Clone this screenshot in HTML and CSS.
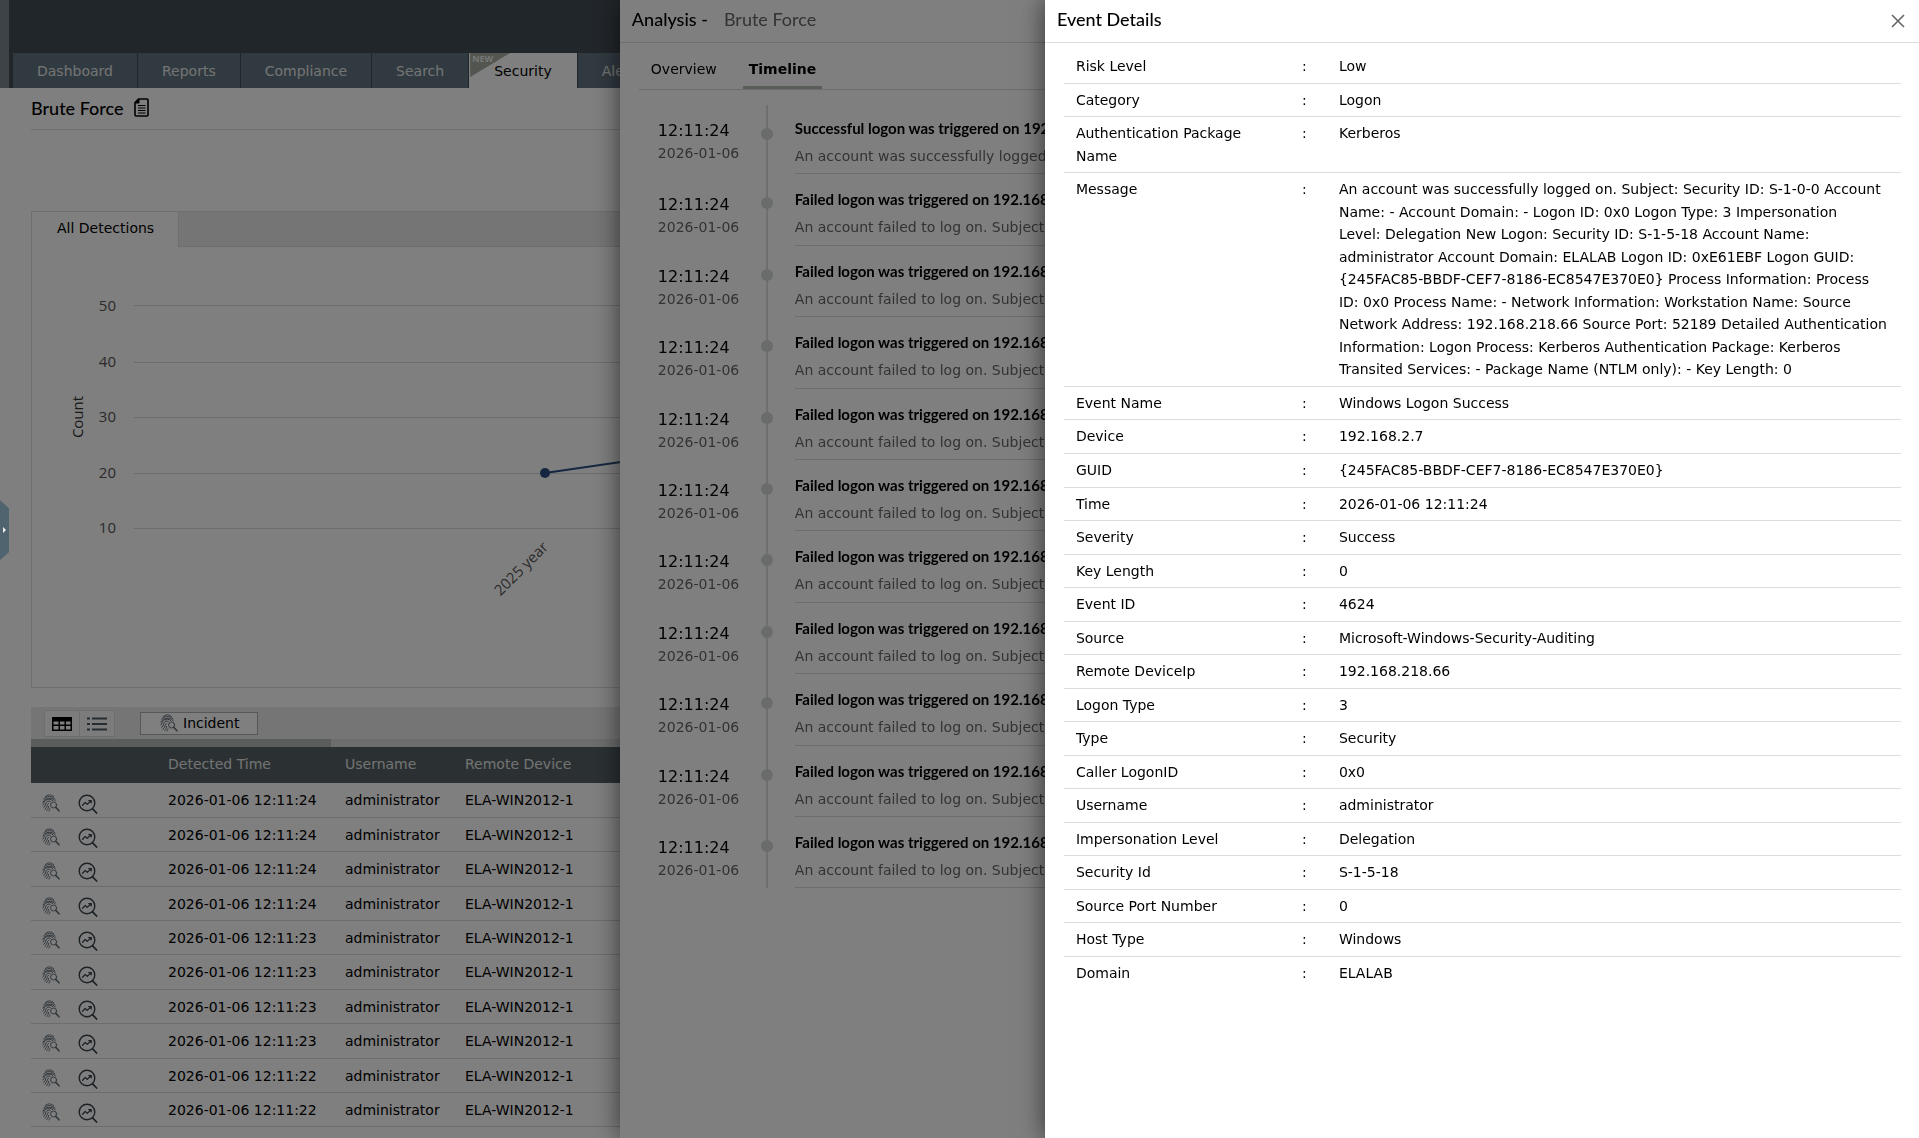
FILE: index.html
```
<!DOCTYPE html>
<html lang="en">
<head>
  <meta charset="UTF-8" />
  <meta name="viewport" content="width=device-width, initial-scale=1.0"/>
  <title>Brute Force - Event Details</title>
  <link rel="stylesheet" href="styles.css">
</head>
<body>

  <!-- shared icons -->
  <svg class="sprite" aria-hidden="true">
    <symbol id="icon-incident" viewBox="0 0 18 18">
      <g fill="none" stroke="currentColor" stroke-width="1" stroke-linecap="round">
        <path d="M3.500 2.400C5.500 .4 9 .4 11.500 2.400"/>
        <path d="M1.600 5C4 1.800 10.500 1.600 13 5"/>
        <path d="M1 8C2 3.600 11 2.800 13.400 7"/>
        <path d="M1 11C2.600 9 1.600 7.600 3.600 6.200 6 4.600 9.500 5 10.800 6.600"/>
        <path d="M1.800 13.400C4.600 10.600 3 9 5 7.600 6.400 6.800 7.600 7 8.400 7.600"/>
        <path d="M3 15.400C5.600 12.600 4.800 10.800 6.400 9.200"/>
        <path d="M4.800 16.600C6.400 14.800 6.400 13.600 6.600 12.400"/>
        <path d="M7 17C7.600 16.200 7.800 15.400 8 14.800"/>
        <circle cx="11.600" cy="11" r="3"/>
        <path d="M13.800 13.400L17 16.800" stroke-width="1.600"/>
      </g>
    </symbol>
    <symbol id="icon-analyze" viewBox="0 0 20 20">
      <g fill="none" stroke="currentColor" stroke-width="1.4" stroke-linecap="round" stroke-linejoin="round">
        <circle cx="9" cy="9" r="7.800"/>
        <path d="M14.600 14.800L18.600 19" stroke-width="1.800"/>
        <path d="M4.600 11.200L7.200 8.400 9.200 10.400 13.200 6.600M10.800 6.600H13.200V8.800" stroke-width="1.300"/>
      </g>
    </symbol>
  </svg>

  <div class="page">
    <header class="topbar">
      <nav class="tabs">
        <a href="#">Dashboard</a>
        <a href="#">Reports</a>
        <a href="#">Compliance</a>
        <a href="#">Search</a>
        <a href="#" class="active"><span class="ribbon">NEW</span>Security</a>
        <a href="#">Alerts</a>
      </nav>
    </header>

    <main>
      <div class="page-title">
        <h1>Brute Force</h1>
        <svg width="15" height="19" viewBox="0 0 15 19" fill="none" stroke="#000">
          <path d="M4.500 1H13a1 1 0 0 1 1 1V17a1 1 0 0 1-1 1H2a1 1 0 0 1-1-1V4.500Z" stroke-width="1.600"/>
          <path d="M1 5H5V1Z" fill="#000"/>
          <path d="M4 7.500H11.500M4 10H11.500M4 12.500H11.500M4 15H11.500" stroke-width="1.200"/>
        </svg>
      </div>

      <section class="chart-box">
        <div class="chart-tabs">
          <button type="button" class="chart-tab">All Detections</button>
        </div>
        <svg class="chart" width="100%" height="440">
          <g class="grid">
            <line x1="102" x2="100%" y1="58" y2="58"/>
            <line x1="102" x2="100%" y1="115" y2="115"/>
            <line x1="102" x2="100%" y1="170" y2="170"/>
            <line x1="102" x2="100%" y1="226" y2="226"/>
            <line x1="102" x2="100%" y1="281" y2="281"/>
          </g>
          <g class="axis" text-anchor="end">
            <text x="84" y="64">50</text>
            <text x="84" y="120">40</text>
            <text x="84" y="175">30</text>
            <text x="84" y="231">20</text>
            <text x="84" y="286">10</text>
            <text transform="translate(517 301) rotate(-45)">2025 year</text>
          </g>
          <text class="axis-title" text-anchor="middle" transform="translate(51 170) rotate(-90)">Count</text>
          <path class="series" d="M513 226L1100 141"/>
          <circle class="point" cx="513" cy="226" r="5"/>
        </svg>
      </section>

      <div class="toolbar">
        <div class="view-toggle">
          <button type="button" aria-label="Table view">
            <svg width="20" height="14" viewBox="0 0 20 14">
              <rect width="20" height="14" fill="#000"/>
              <path d="M1.500 4.500H6.500V7.500H1.500ZM8 4.500H12.500V7.500H8ZM14 4.500H18.500V7.500H14ZM1.500 9H6.500V12.500H1.500ZM8 9H12.500V12.500H8ZM14 9H18.500V12.500H14Z" fill="#fff"/>
            </svg>
          </button>
          <button type="button" aria-label="List view">
            <svg width="20" height="14" viewBox="0 0 20 14" stroke="#4c5860" stroke-width="2">
              <path d="M0 1.500H3M5 1.500H20M0 7H3M5 7H20M0 12.500H3M5 12.500H20"/>
            </svg>
          </button>
        </div>
        <button type="button" class="incident-btn">
          <svg class="icon" width="18" height="18"><use href="#icon-incident"/></svg>
          Incident
        </button>
      </div>
      <div class="scroll-track"><div class="scroll-thumb"></div></div>

      <table class="detections">
        <thead>
          <tr><th class="col-actions"></th><th class="col-time">Detected Time</th><th class="col-user">Username</th><th class="col-device">Remote Device</th><th>Device</th></tr>
        </thead>
        <tbody>
          <tr><td><div class="actions"><svg class="icon" width="18" height="18"><use href="#icon-incident"/></svg><svg class="icon-dark" width="20" height="20"><use href="#icon-analyze"/></svg></div></td><td>2026-01-06 12:11:24</td><td>administrator</td><td>ELA-WIN2012-1</td><td></td></tr>
          <tr><td><div class="actions"><svg class="icon" width="18" height="18"><use href="#icon-incident"/></svg><svg class="icon-dark" width="20" height="20"><use href="#icon-analyze"/></svg></div></td><td>2026-01-06 12:11:24</td><td>administrator</td><td>ELA-WIN2012-1</td><td></td></tr>
          <tr><td><div class="actions"><svg class="icon" width="18" height="18"><use href="#icon-incident"/></svg><svg class="icon-dark" width="20" height="20"><use href="#icon-analyze"/></svg></div></td><td>2026-01-06 12:11:24</td><td>administrator</td><td>ELA-WIN2012-1</td><td></td></tr>
          <tr><td><div class="actions"><svg class="icon" width="18" height="18"><use href="#icon-incident"/></svg><svg class="icon-dark" width="20" height="20"><use href="#icon-analyze"/></svg></div></td><td>2026-01-06 12:11:24</td><td>administrator</td><td>ELA-WIN2012-1</td><td></td></tr>
          <tr><td><div class="actions"><svg class="icon" width="18" height="18"><use href="#icon-incident"/></svg><svg class="icon-dark" width="20" height="20"><use href="#icon-analyze"/></svg></div></td><td>2026-01-06 12:11:23</td><td>administrator</td><td>ELA-WIN2012-1</td><td></td></tr>
          <tr><td><div class="actions"><svg class="icon" width="18" height="18"><use href="#icon-incident"/></svg><svg class="icon-dark" width="20" height="20"><use href="#icon-analyze"/></svg></div></td><td>2026-01-06 12:11:23</td><td>administrator</td><td>ELA-WIN2012-1</td><td></td></tr>
          <tr><td><div class="actions"><svg class="icon" width="18" height="18"><use href="#icon-incident"/></svg><svg class="icon-dark" width="20" height="20"><use href="#icon-analyze"/></svg></div></td><td>2026-01-06 12:11:23</td><td>administrator</td><td>ELA-WIN2012-1</td><td></td></tr>
          <tr><td><div class="actions"><svg class="icon" width="18" height="18"><use href="#icon-incident"/></svg><svg class="icon-dark" width="20" height="20"><use href="#icon-analyze"/></svg></div></td><td>2026-01-06 12:11:23</td><td>administrator</td><td>ELA-WIN2012-1</td><td></td></tr>
          <tr><td><div class="actions"><svg class="icon" width="18" height="18"><use href="#icon-incident"/></svg><svg class="icon-dark" width="20" height="20"><use href="#icon-analyze"/></svg></div></td><td>2026-01-06 12:11:22</td><td>administrator</td><td>ELA-WIN2012-1</td><td></td></tr>
          <tr><td><div class="actions"><svg class="icon" width="18" height="18"><use href="#icon-incident"/></svg><svg class="icon-dark" width="20" height="20"><use href="#icon-analyze"/></svg></div></td><td>2026-01-06 12:11:22</td><td>administrator</td><td>ELA-WIN2012-1</td><td></td></tr>
        </tbody>
      </table>
    </main>
  </div>

  <!-- Analysis drawer -->
  <aside class="drawer analysis">
    <div class="drawer-head">
      <h2>Analysis -</h2>
      <span class="subject">Brute Force</span>
    </div>
    <div class="drawer-tabs">
      <a href="#">Overview</a>
      <a href="#" class="active">Timeline</a>
    </div>
    <ol class="timeline">
      <li><div class="when"><b>12:11:24</b><span>2026-01-06</span></div><div class="rail"></div><div class="what"><h3>Successful logon was triggered on 192.168</h3><p>An account was successfully logged on.</p></div></li>
      <li><div class="when"><b>12:11:24</b><span>2026-01-06</span></div><div class="rail"></div><div class="what"><h3>Failed logon was triggered on 192.168</h3><p>An account failed to log on. Subject:</p></div></li>
      <li><div class="when"><b>12:11:24</b><span>2026-01-06</span></div><div class="rail"></div><div class="what"><h3>Failed logon was triggered on 192.168</h3><p>An account failed to log on. Subject:</p></div></li>
      <li><div class="when"><b>12:11:24</b><span>2026-01-06</span></div><div class="rail"></div><div class="what"><h3>Failed logon was triggered on 192.168</h3><p>An account failed to log on. Subject:</p></div></li>
      <li><div class="when"><b>12:11:24</b><span>2026-01-06</span></div><div class="rail"></div><div class="what"><h3>Failed logon was triggered on 192.168</h3><p>An account failed to log on. Subject:</p></div></li>
      <li><div class="when"><b>12:11:24</b><span>2026-01-06</span></div><div class="rail"></div><div class="what"><h3>Failed logon was triggered on 192.168</h3><p>An account failed to log on. Subject:</p></div></li>
      <li><div class="when"><b>12:11:24</b><span>2026-01-06</span></div><div class="rail"></div><div class="what"><h3>Failed logon was triggered on 192.168</h3><p>An account failed to log on. Subject:</p></div></li>
      <li><div class="when"><b>12:11:24</b><span>2026-01-06</span></div><div class="rail"></div><div class="what"><h3>Failed logon was triggered on 192.168</h3><p>An account failed to log on. Subject:</p></div></li>
      <li><div class="when"><b>12:11:24</b><span>2026-01-06</span></div><div class="rail"></div><div class="what"><h3>Failed logon was triggered on 192.168</h3><p>An account failed to log on. Subject:</p></div></li>
      <li><div class="when"><b>12:11:24</b><span>2026-01-06</span></div><div class="rail"></div><div class="what"><h3>Failed logon was triggered on 192.168</h3><p>An account failed to log on. Subject:</p></div></li>
      <li><div class="when"><b>12:11:24</b><span>2026-01-06</span></div><div class="rail"></div><div class="what"><h3>Failed logon was triggered on 192.168</h3><p>An account failed to log on. Subject:</p></div></li>
    </ol>
  </aside>

  <div class="overlay"></div>

  <button type="button" class="side-handle" aria-label="Expand sidebar"></button>

  <!-- Event Details drawer -->
  <aside class="drawer details">
    <div class="drawer-head">
      <h2>Event Details</h2>
      <button type="button" class="close" aria-label="Close">
        <svg width="14" height="14" viewBox="0 0 14 14" stroke="#666" stroke-width="1.600"><path d="M1 1L13 13M13 1L1 13"/></svg>
      </button>
    </div>
    <table class="fields">
      <tbody>
        <tr><th>Risk Level</th><td class="sep">:</td><td>Low</td></tr>
        <tr><th>Category</th><td class="sep">:</td><td>Logon</td></tr>
        <tr><th>Authentication Package Name</th><td class="sep">:</td><td>Kerberos</td></tr>
        <tr>
          <th>Message</th><td class="sep">:</td>
          <td>
            An account was successfully logged on. Subject: Security ID: S-1-0-0 Account<br>
            Name: - Account Domain: - Logon ID: 0x0 Logon Type: 3 Impersonation<br>
            Level: Delegation New Logon: Security ID: S-1-5-18 Account Name:<br>
            administrator Account Domain: ELALAB Logon ID: 0xE61EBF Logon GUID:<br>
            {245FAC85-BBDF-CEF7-8186-EC8547E370E0} Process Information: Process<br>
            ID: 0x0 Process Name: - Network Information: Workstation Name: Source<br>
            Network Address: 192.168.218.66 Source Port: 52189 Detailed Authentication<br>
            Information: Logon Process: Kerberos Authentication Package: Kerberos<br>
            Transited Services: - Package Name (NTLM only): - Key Length: 0
          </td>
        </tr>
        <tr><th>Event Name</th><td class="sep">:</td><td>Windows Logon Success</td></tr>
        <tr><th>Device</th><td class="sep">:</td><td>192.168.2.7</td></tr>
        <tr><th>GUID</th><td class="sep">:</td><td>{245FAC85-BBDF-CEF7-8186-EC8547E370E0}</td></tr>
        <tr><th>Time</th><td class="sep">:</td><td>2026-01-06 12:11:24</td></tr>
        <tr><th>Severity</th><td class="sep">:</td><td>Success</td></tr>
        <tr><th>Key Length</th><td class="sep">:</td><td>0</td></tr>
        <tr><th>Event ID</th><td class="sep">:</td><td>4624</td></tr>
        <tr><th>Source</th><td class="sep">:</td><td>Microsoft-Windows-Security-Auditing</td></tr>
        <tr><th>Remote DeviceIp</th><td class="sep">:</td><td>192.168.218.66</td></tr>
        <tr><th>Logon Type</th><td class="sep">:</td><td>3</td></tr>
        <tr><th>Type</th><td class="sep">:</td><td>Security</td></tr>
        <tr><th>Caller LogonID</th><td class="sep">:</td><td>0x0</td></tr>
        <tr><th>Username</th><td class="sep">:</td><td>administrator</td></tr>
        <tr><th>Impersonation Level</th><td class="sep">:</td><td>Delegation</td></tr>
        <tr><th>Security Id</th><td class="sep">:</td><td>S-1-5-18</td></tr>
        <tr><th>Source Port Number</th><td class="sep">:</td><td>0</td></tr>
        <tr><th>Host Type</th><td class="sep">:</td><td>Windows</td></tr>
        <tr><th>Domain</th><td class="sep">:</td><td>ELALAB</td></tr>
      </tbody>
    </table>
  </aside>

</body>
</html>
```
FILE: styles.css
```
* { box-sizing: border-box; margin: 0; padding: 0; }
body {
  font-family: Verdana, "DejaVu Sans", sans-serif;
  font-size: 14px;
  line-height: 1.6;
  color: #000;
  background: #fff;
  height: 100vh;
  overflow: hidden;
}
button { font: inherit; color: inherit; background: none; border: none; cursor: pointer; }
a { color: inherit; text-decoration: none; }
svg { display: block; }
.sprite { position: absolute; width: 0; height: 0; }
.icon { color: #66717a; }
.icon-dark { color: #39434a; }

/* Top bar */
.topbar {
  background-color: #434c54;
  border-left: 9px solid #7b868e;
  padding: 53px 0 0 4px;
}
.tabs { display: flex; gap: 1px; }
.tabs a {
  position: relative;
  height: 35px;
  line-height: 36px;
  padding: 0 24px;
  background-color: #637480;
  color: #e6e9e9;
}
.tabs .active { background-color: #fff; color: #000; padding: 0 25px; }
.ribbon {
  position: absolute;
  top: 0;
  left: 1px;
  width: 40px;
  height: 24px;
  padding-left: 2px;
  background-color: #a4aaa0;
  clip-path: polygon(0 0, 100% 0, 0 100%);
  font: bold 9px/12px "Open Sans", sans-serif;
  color: #eee;
}

/* Page content */
main { padding-left: 31px; }
.page-title {
  display: flex;
  align-items: center;
  gap: 10px;
  height: 42px;
  padding-bottom: 2px;
  border-bottom: 1px solid #dcdcdc;
}
h1, h2, .subject { font: 500 18px/24px Lato, sans-serif; }

.chart-box { margin-top: 81px; border: 1px solid #dcdcdc; }
.chart-tabs { background-color: #ebebeb; border-bottom: 1px solid #dcdcdc; height: 35px; }
.chart-tab {
  height: 35px;
  padding: 0 24px 3px 25px;
  background-color: #fff;
  border-right: 1px solid #dcdcdc;
}
.grid line { stroke: #d8d8d8; shape-rendering: crispEdges; }
.axis, .axis-title { font-family: "Open Sans", sans-serif; font-size: 15px; fill: #555; }
.axis-title { fill: #333; }
.series { stroke: #2b4f80; stroke-width: 2; fill: none; }
.point { fill: #2b4f80; }

.toolbar {
  display: flex;
  align-items: center;
  gap: 25px;
  height: 32px;
  margin-top: 19px;
  padding-left: 13px;
  background-color: #ebebeb;
}
.view-toggle { display: flex; border: 1px solid #dcdcdc; background-color: #f8f8f8; }
.view-toggle button { padding: 6px 7px 5px; height: 25px; }
.view-toggle button + button { border-left: 1px solid #dcdcdc; }
.incident-btn {
  display: flex;
  align-items: center;
  gap: 5px;
  height: 23px;
  padding: 0 18px 0 19px;
  border: 1px solid #a8b0ac;
  background-color: #fff;
}
.scroll-track { height: 8px; background-color: #d8dad8; }
.scroll-thumb { width: 300px; height: 8px; background-color: #b4bab6; }

.detections { width: 100%; border-collapse: collapse; table-layout: fixed; }
.detections th {
  padding: 6px 0 8px;
  background-color: #566166;
  color: #e4e6e4;
  font-weight: normal;
  text-align: left;
}
.detections td { padding: 6px 0 5px; border-bottom: 1px solid #d8d8d8; }
.col-actions { width: 137px; }
.col-time { width: 177px; }
.col-user { width: 120px; }
.col-device { width: 154px; }
.actions { display: flex; gap: 18px; height: 22px; padding: 4px 0 0 11px; }

/* Drawers */
.drawer { position: fixed; top: 0; right: 0; bottom: 0; background-color: #fff; box-shadow: 0 0 24px rgba(0,0,0,0.6); }
.analysis { width: 67.7%; }
.details { width: 45.55%; }
.drawer-head {
  display: flex;
  align-items: center;
  gap: 16px;
  height: 43px;
  padding: 0 13px 4px 12px;
  border-bottom: 1px solid #dedede;
}
.subject { color: #666; font-weight: normal; }
.close { margin: 4px 1px 0 auto; }
.overlay { position: fixed; inset: 0; background-color: rgba(0,0,0,0.5); }

.drawer-tabs {
  display: flex;
  gap: 14px;
  height: 47px;
  margin-left: 19px;
  border-bottom: 1px solid #d8d8d8;
}
.drawer-tabs a { padding: 15px 12px 0; }
.drawer-tabs .active { padding: 15px 6px 0; font-weight: bold; border-bottom: 3px solid #b4bcb2; }

/* Timeline */
.timeline { list-style: none; margin-top: 15px; padding-left: 38px; }
.timeline li { display: grid; grid-template-columns: 103px 12px 1fr; }
.when { padding-top: 19px; line-height: 23px; }
.when b { display: block; font-weight: normal; font-size: 16px; }
.when span { color: #666; }
.rail {
  background: linear-gradient(#dce0e0, #dce0e0) center / 2px 100% no-repeat;
  padding-top: 23px;
}
.rail::before { content: ""; display: block; width: 12px; height: 12px; border-radius: 50%; background-color: #d4d9d8; }
.what { margin-left: 22px; padding: 13px 0 6px; border-bottom: 1px solid #d8d8d8; white-space: nowrap; }
.what h3 { font: bold 15px/1.6 Lato, sans-serif; }
.what p { margin-top: 5px; color: #666; }
.timeline li:first-child .when { padding-top: 14px; }
.timeline li:first-child .what { padding-top: 11px; }

/* Sidebar handle */
.side-handle {
  position: fixed;
  left: 0;
  top: 500px;
  width: 9px;
  height: 60px;
  background-color: #50646f;
  clip-path: polygon(0 0, 100% 14%, 100% 87%, 0 100%);
}
.side-handle::before {
  content: "";
  display: block;
  margin-left: 3px;
  border: 3px solid transparent;
  border-left-color: #eee;
  border-right: none;
}

/* Event fields */
.fields {
  width: calc(100% - 37px);
  margin: 7px 18px 0 19px;
  border-collapse: collapse;
  table-layout: fixed;
  line-height: 1.61;
}
.fields tr + tr { border-top: 1px solid #dcdcdc; }
.fields th, .fields td { padding: 5px 0; vertical-align: top; text-align: left; font-weight: normal; }
.fields th { width: 238px; padding: 5px 50px 5px 12px; }
.fields .sep { width: 37px; }
```
